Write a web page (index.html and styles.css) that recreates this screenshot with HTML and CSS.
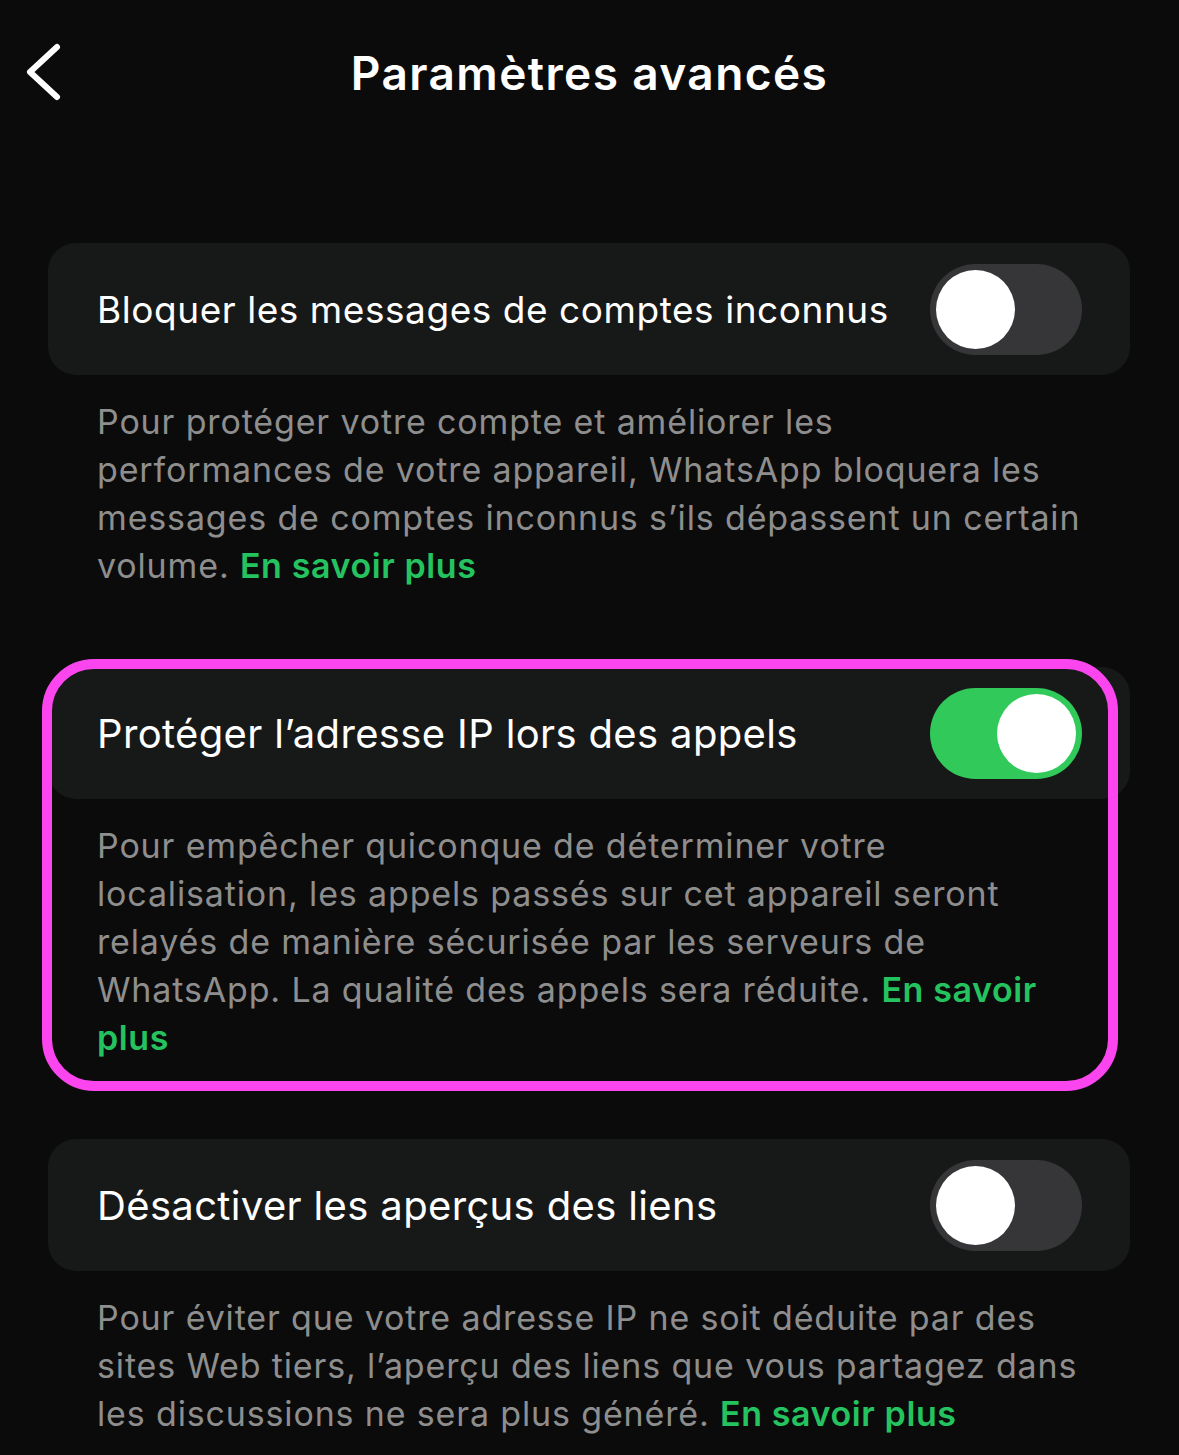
FILE: index.html
```html
<!DOCTYPE html>
<html lang="fr">
<head>
<meta charset="utf-8">
<link rel="stylesheet" href="styles.css">
</head>
<body>
<header class="topbar">
  <svg class="back" viewBox="0 0 40 60" width="40" height="60"><path d="M33 5 L6 30 L33 55" fill="none" stroke="#fff" stroke-width="6" stroke-linecap="round" stroke-linejoin="round"/></svg>
  <h1 class="title">Paramètres avancés</h1>
</header>
<main class="content">
  <section class="group">
    <div class="card">
      <span class="label fit">Bloquer les messages de comptes inconnus</span>
      <span class="toggle"><span class="knob"></span></span>
    </div>
    <p class="desc">Pour protéger votre compte et améliorer les<br>performances de votre appareil, WhatsApp bloquera les messages de comptes inconnus s’ils dépassent un certain volume. <span class="link">En savoir plus</span></p>
  </section>
  <section class="group highlighted">
    <div class="card">
      <span class="label">Protéger l’adresse IP lors des appels</span>
      <span class="toggle on"><span class="knob"></span></span>
    </div>
    <p class="desc">Pour empêcher quiconque de déterminer votre localisation, les appels passés sur cet appareil seront relayés de manière sécurisée par les serveurs de WhatsApp. La qualité des appels sera réduite. <span class="link">En savoir plus</span></p>
    <div class="ring"></div>
  </section>
  <section class="group">
    <div class="card">
      <span class="label">Désactiver les aperçus des liens</span>
      <span class="toggle"><span class="knob"></span></span>
    </div>
    <p class="desc">Pour éviter que votre adresse IP ne soit déduite par des sites Web tiers, l’aperçu des liens que vous partagez dans les discussions ne sera plus généré. <span class="link">En savoir plus</span></p>
  </section>
</main>
</body>
</html>
```
FILE: styles.css
```css
html, body {
  margin: 0;
  padding: 0;
  background: #0b0b0b;
}
body {
  font-family: Inter, "Noto Sans", "Liberation Sans", sans-serif;
  color: #fff;
  width: 1179px;
  height: 1455px;
  overflow: hidden;
}
.topbar {
  height: 145px;
  display: flex;
  align-items: center;
  justify-content: center;
  position: relative;
}
.back {
  position: absolute;
  left: 24px;
  top: 42px;
}
.title {
  margin: 0;
  font-size: 46px;
  font-weight: 600;
  letter-spacing: 1.4px;
}
.content {
  padding: 98px 49px 0 48px;
  display: flex;
  flex-direction: column;
  gap: 77px;
}
.group {
  position: relative;
}
.card {
  height: 132px;
  background: #171818;
  border-radius: 28px;
  display: flex;
  align-items: center;
  justify-content: space-between;
  padding: 0 48px 0 49px;
}
.label {
  font-size: 40px;
  letter-spacing: 0.35px;
}
.label.fit {
  font-size: 37px;
  letter-spacing: 0.55px;
}
.toggle {
  width: 152px;
  height: 91px;
  border-radius: 46px;
  background: #363638;
  position: relative;
  flex: none;
}
.toggle .knob {
  position: absolute;
  top: 6px;
  left: 6px;
  width: 79px;
  height: 79px;
  border-radius: 50%;
  background: #fff;
}
.toggle.on {
  background: #31c95a;
}
.toggle.on .knob {
  left: auto;
  right: 6px;
}
.desc {
  margin: 23px 44px 0 49px;
  font-size: 34px;
  line-height: 48px;
  color: #8e8e8e;
  letter-spacing: 0.85px;
}
.link {
  color: #25c35f;
  font-weight: 600;
  letter-spacing: 0.6px;
}
.ring {
  position: absolute;
  left: -6px;
  top: -8px;
  width: 1076px;
  height: 432px;
  box-sizing: border-box;
  border: 10px solid #fb46f0;
  border-radius: 52px;
  pointer-events: none;
}
```
